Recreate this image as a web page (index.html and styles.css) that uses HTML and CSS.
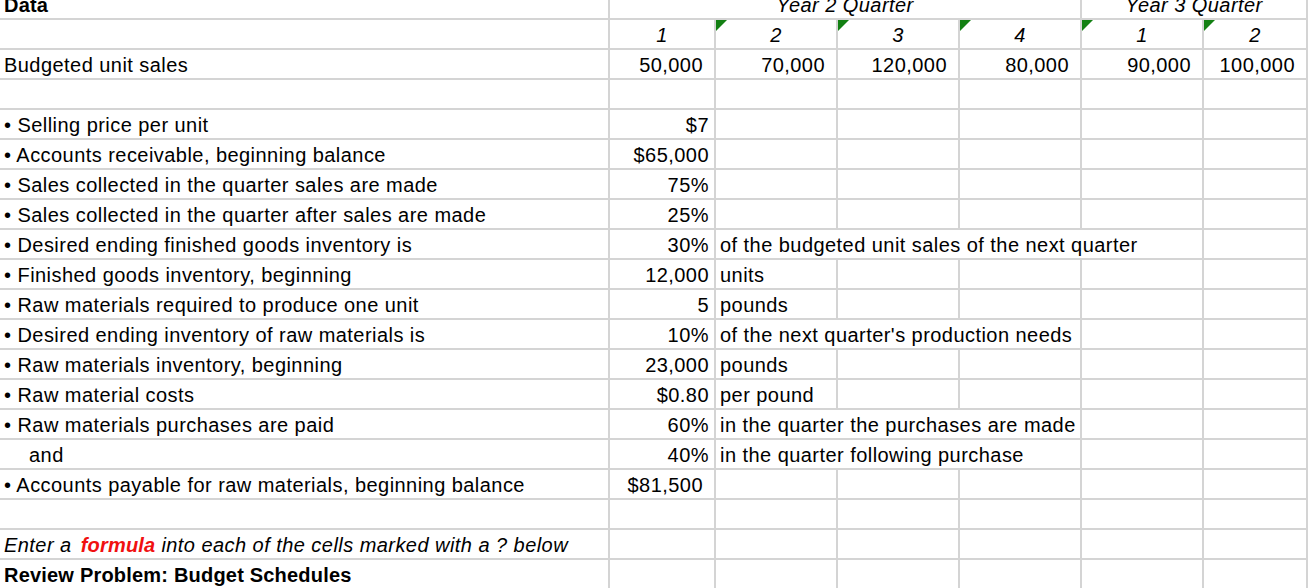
FILE: index.html
```html
<!DOCTYPE html>
<html lang="en">
<head>
<meta charset="utf-8">
<title>Review Problem: Budget Schedules</title>
<link rel="stylesheet" href="styles.css">
</head>
<body>
<div class="sheet">
  <div class="c b">Data</div>
  <div class="c i ctr s4">Year 2 Quarter</div>
  <div class="c i ctr s2">Year 3 Quarter</div>

  <div class="c"></div>
  <div class="c i ctr">1</div>
  <div class="c i ctr flag">2</div>
  <div class="c i ctr flag">3</div>
  <div class="c i ctr flag">4</div>
  <div class="c i ctr flag">1</div>
  <div class="c i ctr flag">2</div>

  <div class="c">Budgeted unit sales</div>
  <div class="c num">50,000</div>
  <div class="c num">70,000</div>
  <div class="c num">120,000</div>
  <div class="c num">80,000</div>
  <div class="c num">90,000</div>
  <div class="c num">100,000</div>

  <div class="c"></div><div class="c"></div><div class="c"></div><div class="c"></div><div class="c"></div><div class="c"></div><div class="c"></div>

  <div class="c">• Selling price per unit</div>
  <div class="c r">$7</div>
  <div class="c"></div><div class="c"></div><div class="c"></div><div class="c"></div><div class="c"></div>

  <div class="c">• Accounts receivable, beginning balance</div>
  <div class="c r">$65,000</div>
  <div class="c"></div><div class="c"></div><div class="c"></div><div class="c"></div><div class="c"></div>

  <div class="c">• Sales collected in the quarter sales are made</div>
  <div class="c r">75%</div>
  <div class="c"></div><div class="c"></div><div class="c"></div><div class="c"></div><div class="c"></div>

  <div class="c">• Sales collected in the quarter after sales are made</div>
  <div class="c r">25%</div>
  <div class="c"></div><div class="c"></div><div class="c"></div><div class="c"></div><div class="c"></div>

  <div class="c">• Desired ending finished goods inventory is</div>
  <div class="c r">30%</div>
  <div class="c s4">of the budgeted unit sales of the next quarter</div>
  <div class="c"></div>

  <div class="c">• Finished goods inventory, beginning</div>
  <div class="c r">12,000</div>
  <div class="c">units</div>
  <div class="c"></div><div class="c"></div><div class="c"></div><div class="c"></div>

  <div class="c">• Raw materials required to produce one unit</div>
  <div class="c r">5</div>
  <div class="c">pounds</div>
  <div class="c"></div><div class="c"></div><div class="c"></div><div class="c"></div>

  <div class="c">• Desired ending inventory of raw materials is</div>
  <div class="c r">10%</div>
  <div class="c s3">of the next quarter's production needs</div>
  <div class="c"></div><div class="c"></div>

  <div class="c">• Raw materials inventory, beginning</div>
  <div class="c r">23,000</div>
  <div class="c">pounds</div>
  <div class="c"></div><div class="c"></div><div class="c"></div><div class="c"></div>

  <div class="c">• Raw material costs</div>
  <div class="c r">$0.80</div>
  <div class="c">per pound</div>
  <div class="c"></div><div class="c"></div><div class="c"></div><div class="c"></div>

  <div class="c">• Raw materials purchases are paid</div>
  <div class="c r">60%</div>
  <div class="c s3">in the quarter the purchases are made</div>
  <div class="c"></div><div class="c"></div>

  <div class="c indent">and</div>
  <div class="c r">40%</div>
  <div class="c s3">in the quarter following purchase</div>
  <div class="c"></div><div class="c"></div>

  <div class="c">• Accounts payable for raw materials, beginning balance</div>
  <div class="c num">$81,500</div>
  <div class="c"></div><div class="c"></div><div class="c"></div><div class="c"></div><div class="c"></div>

  <div class="c"></div><div class="c"></div><div class="c"></div><div class="c"></div><div class="c"></div><div class="c"></div><div class="c"></div>

  <div class="c i">Enter a<span class="red">formula</span>into each of the cells marked with a ? below</div>
  <div class="c"></div><div class="c"></div><div class="c"></div><div class="c"></div><div class="c"></div><div class="c"></div>

  <div class="c b">Review Problem: Budget Schedules</div>
  <div class="c"></div><div class="c"></div><div class="c"></div><div class="c"></div><div class="c"></div><div class="c"></div>
</div>
</body>
</html>
```

FILE: styles.css
```css
html, body {
  margin: 0;
  padding: 0;
  background: #fff;
}

body {
  font-family: "Liberation Sans", Arial, sans-serif;
  font-size: 20px;
  letter-spacing: 0.45px;
  color: #000;
  overflow: hidden;
}

.sheet {
  display: grid;
  grid-template-columns: 608px 104px 120px 120px 120px 120px 102px;
  grid-auto-rows: 28px;
  gap: 2px;
  background: #d4d4d4;
  width: max-content;
  padding-right: 2px;
  margin-top: -10px;
}

.c {
  position: relative;
  background: #fff;
  display: flex;
  align-items: flex-end;
  padding: 0 4px 2px 4px;
  line-height: 22px;
  white-space: nowrap;
  overflow: visible;
}

.r {
  justify-content: flex-end;
  padding-right: 5px;
}

.num {
  justify-content: flex-end;
  padding-right: 11px;
}

.ctr {
  justify-content: center;
}

.i {
  font-style: italic;
}

.b {
  font-weight: bold;
  letter-spacing: 0.2px;
}

.s2 { grid-column: span 2; }
.s3 { grid-column: span 3; }
.s4 { grid-column: span 4; }

.indent {
  padding-left: 29px;
}

.red {
  color: #f01010;
  font-weight: bold;
  letter-spacing: 0.2px;
  margin: 0 6px 0 9px;
}

.flag::before {
  content: "";
  position: absolute;
  top: 0;
  left: 0;
  width: 11px;
  height: 11px;
  background: #138013;
  clip-path: polygon(0 0, 100% 0, 0 100%);
}
```
